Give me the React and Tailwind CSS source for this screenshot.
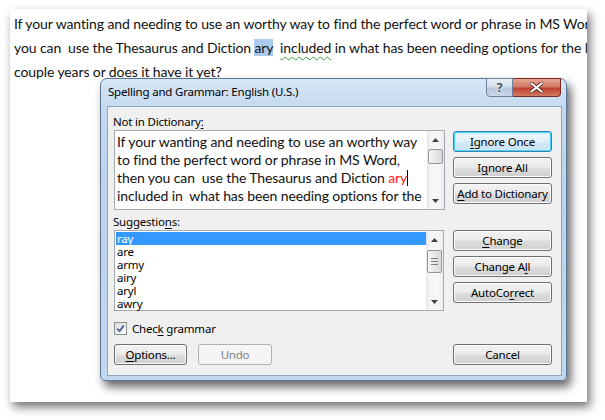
import React from 'react';

const UI = "font-['Noto_Sans',sans-serif] tracking-[-0.2px]";
const DOC = "font-['Lato',sans-serif] tracking-[-0.1px]";

function Tri({ down }) {
  return (
    <svg width="7" height="4" viewBox="0 0 7 4">
      <polygon points={down ? '0,0 7,0 3.5,4' : '0,4 3.5,0 7,4'} fill="#404040" />
    </svg>
  );
}

function ScrollBar({ thumb, grip }) {
  return (
    <div className="w-[17px] shrink-0 flex flex-col bg-[linear-gradient(90deg,#e7e7e7,#f6f6f6_25%,#f6f6f6_75%,#ebebeb)]">
      <div className="h-[17px] flex items-center justify-center">
        <Tri />
      </div>
      <div className="flex-1">
        <div
          className={
            'mx-auto w-[15px] rounded-[2px] border border-[#979797] bg-[linear-gradient(90deg,#f4f4f4,#e8e8e8_50%,#d9d9d9)] flex flex-col items-center justify-center gap-[2px] ' +
            thumb
          }
        >
          {grip && (
            <>
              <div className="w-[7px] h-[1px] bg-[#7c7c7c]" />
              <div className="w-[7px] h-[1px] bg-[#7c7c7c]" />
              <div className="w-[7px] h-[1px] bg-[#7c7c7c]" />
            </>
          )}
        </div>
      </div>
      <div className="h-[17px] flex items-center justify-center">
        <Tri down />
      </div>
    </div>
  );
}

function Btn({ children, className = '', def, disabled }) {
  let look =
    'border-[#707070] bg-[linear-gradient(180deg,#f2f2f2_0%,#ebebeb_48%,#dddddd_52%,#cfcfcf_100%)] shadow-[inset_0_0_0_1px_#fcfcfc] text-black';
  if (def)
    look =
      'border-[#3c7fb1] bg-[linear-gradient(180deg,#eaf6fd_0%,#e3f1fa_48%,#d5e9f6_52%,#c6e1f3_100%)] shadow-[inset_0_0_0_1px_#48d4f9,inset_0_0_0_2px_#c9eefc] text-black';
  if (disabled) look = 'border-[#adb2b5] bg-[#f4f4f4] text-[#838383]';
  return (
    <div
      className={
        'h-[21px] rounded-[3px] border flex items-center justify-center whitespace-nowrap text-[11.5px] leading-none ' +
        look +
        ' ' +
        className
      }
    >
      {children}
    </div>
  );
}

const U = ({ children }) => <span className="underline underline-offset-[2px]">{children}</span>;

export default function App() {
  return (
    <div className="w-[605px] h-[420px] bg-white overflow-hidden">
      <div className="ml-[10px] mt-[9px] w-[577px] h-[393px] bg-white relative shadow-[3px_5px_9px_rgba(0,0,0,0.55)]">
        {/* document text */}
        <div className={'pl-[4px] pt-[3px] text-[14px] leading-[24px] text-[#111] overflow-hidden whitespace-pre ' + DOC}>
          <div>If your wanting and needing to use an worthy way to find the perfect word or phrase in MS Word, then</div>
          <div>
            {'you can  use the Thesaurus and Diction '}
            <span className="bg-[#aacbee]">ary</span>
            {'  '}
            <span className="underline decoration-wavy decoration-[#3aa23a] decoration-1 underline-offset-[3px]">included</span>
            {' in what has been needing options for the last'}
          </div>
          <div>couple years or does it have it yet?</div>
        </div>

        {/* dialog */}
        <div
          className={
            'absolute left-[90px] top-[69px] w-[467px] h-[303px] rounded-t-[7px] rounded-b-[5px] border border-[#5b7797] bg-[linear-gradient(180deg,#d6e6f6_0%,#c4d9ef_10%,#bcd3eb_40%,#c2d8ee_100%)] shadow-[4px_6px_10px_rgba(0,0,0,0.6)] flex flex-col ' +
            UI
          }
        >
          {/* title bar */}
          <div className="h-[27px] flex items-start">
            <div className="pl-[7px] h-[26px] flex items-center text-[11.5px] text-black flex-1">
              Spelling and Grammar: English (U.S.)
            </div>
            <div className="flex mr-[5px] -mt-[1px]">
              <div className="w-[27px] h-[19px] rounded-bl-[4px] border border-[#6d819b] bg-[linear-gradient(180deg,#e9eff6_0%,#d3dfec_45%,#b9c9dc_55%,#c9d7e7_100%)] flex items-center justify-center text-[13px] font-bold text-[#4b5563] [text-shadow:0_0_2px_#fff]">
                ?
              </div>
              <div className="w-[48px] h-[19px] rounded-br-[4px] border border-l-0 border-[#7a2a23] bg-[linear-gradient(180deg,#e8a493_0%,#d27a68_45%,#c0412e_55%,#d37a62_100%)] flex items-center justify-center">
                <svg width="13" height="11" viewBox="0 0 13 11">
                  <path d="M1.5 1.5 L11.5 9.5 M11.5 1.5 L1.5 9.5" stroke="#5a2a20" strokeWidth="4" strokeLinecap="round" />
                  <path d="M1.5 1.5 L11.5 9.5 M11.5 1.5 L1.5 9.5" stroke="#ffffff" strokeWidth="2.2" strokeLinecap="round" />
                </svg>
              </div>
            </div>
          </div>

          {/* client area */}
          <div className="ml-[6px] mr-[4px] h-[270px] border border-[#8ea4bf] bg-[#f0f0f0] flex flex-col text-[11.5px] text-black">
            {/* section 1 */}
            <div className="flex">
              <div className="pl-[5px] pt-[7px] w-[345px]">
                <div className="h-[16px] leading-[16px]">
                  Not in Dictionary<U>:</U>
                </div>
                <div className="ml-[1px] w-[331px] h-[80px] border border-[#a5a9b0] bg-white flex">
                  <div className={'flex-1 overflow-hidden pl-[2px] pt-[2px] text-[14px] leading-[18px] text-[#111] whitespace-pre ' + DOC}>
                    <div>If your wanting and needing to use an worthy way</div>
                    <div>to find the perfect word or phrase in MS Word,</div>
                    <div className="flex items-center">
                      {'then you can  use the Thesaurus and Diction '}
                      <span className="text-[#ff1a1a]">ary</span>
                      <span className="w-[1px] h-[16px] bg-black" />
                    </div>
                    <div>included in  what has been needing options for the</div>
                    <div>last couple years or does it have it yet?</div>
                  </div>
                  <ScrollBar thumb="mt-[1px] h-[15px]" />
                </div>
              </div>
              <div className="pt-[24px] w-[99px] flex flex-col gap-[5px]">
                <Btn def>
                  <U>I</U>gnore Once
                </Btn>
                <Btn>
                  I<U>g</U>nore All
                </Btn>
                <Btn>
                  <U>A</U>dd to Dictionary
                </Btn>
              </div>
            </div>

            {/* section 2 */}
            <div className="flex">
              <div className="pl-[5px] pt-[4px] w-[345px]">
                <div className="h-[16px] leading-[16px]">
                  Suggestio<U>n</U>s:
                </div>
                <div className="ml-[1px] w-[330px] h-[81px] border border-[#a5a9b0] bg-white flex">
                  <div className="flex-1 pl-[1px] pt-[1px] text-[11.5px] leading-[13px]">
                    <div className="h-[13px] bg-[#3399ff] text-white pl-[1px]">ray</div>
                    <div className="pl-[1px]">are</div>
                    <div className="pl-[1px]">army</div>
                    <div className="pl-[1px]">airy</div>
                    <div className="pl-[1px]">aryl</div>
                    <div className="pl-[1px]">awry</div>
                  </div>
                  <ScrollBar thumb="mt-[2px] h-[23px]" grip />
                </div>
              </div>
              <div className="pt-[20px] w-[99px] flex flex-col gap-[5px]">
                <Btn>
                  <U>C</U>hange
                </Btn>
                <Btn>
                  Change A<U>l</U>l
                </Btn>
                <Btn>
                  AutoCo<U>r</U>rect
                </Btn>
              </div>
            </div>

            {/* check grammar */}
            <div className="mt-[11px] pl-[6px] flex items-center gap-[5px] h-[13px]">
              <div className="w-[13px] h-[13px] border border-[#8f8f8f] bg-[linear-gradient(135deg,#dcdcdc,#fbfbfb)] flex items-center justify-center">
                <svg width="9" height="9" viewBox="0 0 9 9">
                  <path d="M1.2 4.6 L3.6 7.2 L7.8 1.4" fill="none" stroke="#4c61a5" strokeWidth="1.8" />
                </svg>
              </div>
              <div className="leading-[13px]">
                Chec<U>k</U> grammar
              </div>
            </div>

            {/* bottom buttons */}
            <div className="mt-[9px] pl-[6px] flex items-center">
              <Btn className="w-[73px]">
                <U>O</U>ptions...
              </Btn>
              <Btn disabled className="w-[74px] ml-[11px]">
                Undo
              </Btn>
              <div className="flex-1" />
              <Btn className="w-[99px] mr-[9px]">Cancel</Btn>
            </div>
          </div>
        </div>
      </div>
    </div>
  );
}
